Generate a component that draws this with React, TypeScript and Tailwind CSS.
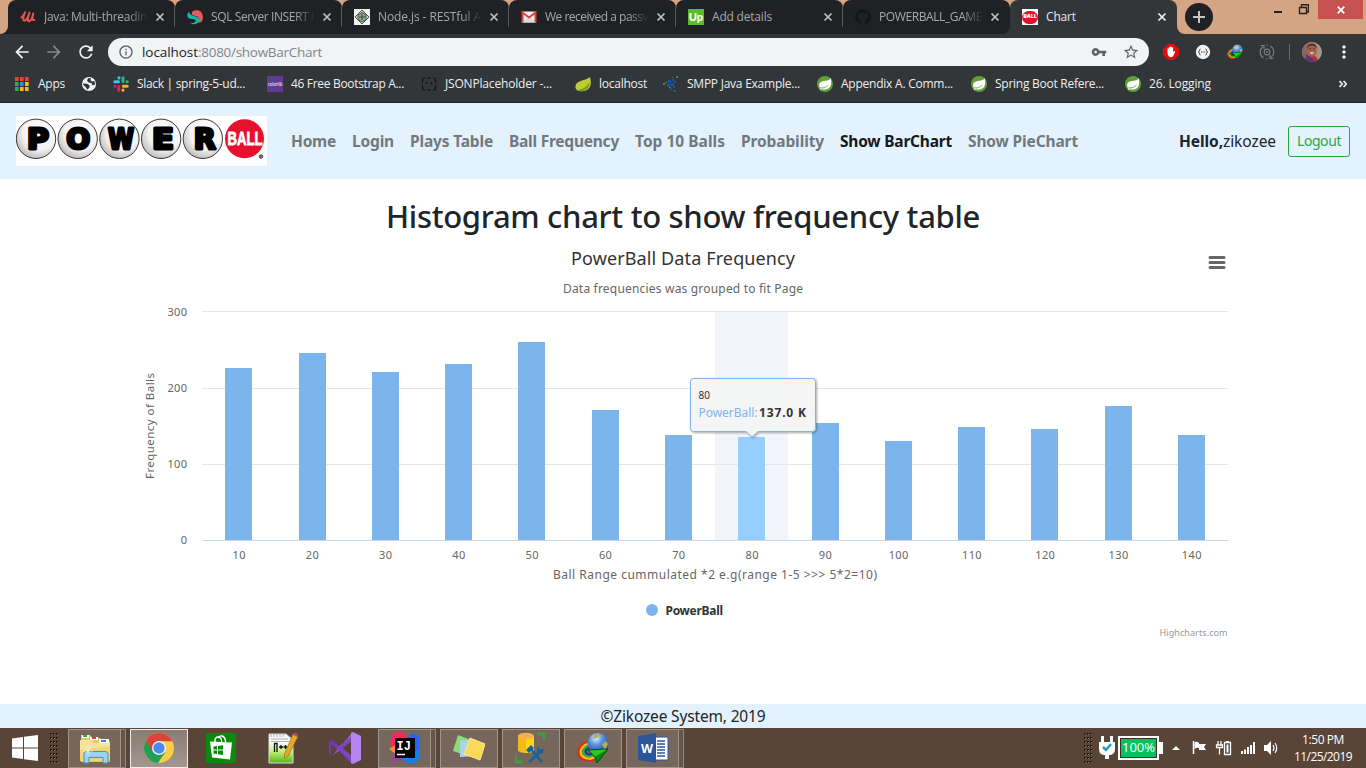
import { useLayoutEffect, useRef, type ReactNode } from "react";
import {
  MdArrowBack,
  MdArrowForward,
  MdRefresh,
  MdInfoOutline,
  MdVpnKey,
  MdStarBorder,
  MdMoreVert,
} from "react-icons/md";
import { FaGithub } from "react-icons/fa";

/* Text that is tracked in or out to fill a given width. */
function Fit({ w, className = "", children }: { w: number; className?: string; children: string }) {
  const ref = useRef<HTMLSpanElement>(null);
  useLayoutEffect(() => {
    const el = ref.current;
    if (!el) return;
    el.style.letterSpacing = "0px";
    const natural = el.getBoundingClientRect().width;
    el.style.letterSpacing = `${(w - natural) / children.length}px`;
  }, [w, children]);
  return (
    <span ref={ref} className={`inline-block shrink-0 whitespace-nowrap ${className}`}>
      {children}
    </span>
  );
}

/* ---------- favicons ---------- */

const UdemyIcon = () => (
  <svg className="size-4" viewBox="0 0 16 16" fill="none" stroke="#eb524f" strokeLinecap="round" strokeLinejoin="round">
    <path d="M1.500 8.500C3.500 6.500 4.800 4.500 5 3.300C3.800 6 2.600 9.500 3.600 11.300C5.500 12.500 7.300 9.500 8.400 7" strokeWidth="2" />
    <path d="M9.500 3.600C8 7 7 11.800 8.800 12.300C10.600 12.400 12.500 8 13.300 4.500C12.300 8 11.600 11.800 14.300 11" strokeWidth="2" />
  </svg>
);
const SqlIcon = () => (
  <svg className="size-4" viewBox="0 0 16 16">
    <path d="M15.500 11C16.800 6 14.500 1.500 10.500 1.200C7 .8 4.500 2.200 4.800 4.500C5.500 7.500 9.500 6 11.500 8.500C12.500 10 12.300 12.500 11 14C13.500 13.700 15 12.500 15.500 11Z" fill="#ee5a5a" />
    <path d="M2 2.500C0 5 -.5 8 2.500 9.500C5 10.600 8.500 10 8.700 11.700C8.500 13.800 5.500 14.500 3 13.500C5.500 16.200 10 15.800 12 12.500C13 8.500 10 8 7 7C4.500 6.300 2.500 5 2 2.500Z" fill="#18b5a2" />
  </svg>
);
const NodeIcon = () => (
  <svg className="size-4" viewBox="0 0 16 16">
    <path d="M0 0H16V16H0Z" fill="#f4f4f0" />
    <path d="M8 1L15 8L8 15L1 8Z" fill="#cfd5cf" stroke="#555" />
    <path d="M8 3.500L12 6V10.500L8 13L4 10.500V6Z" fill="#91aa91" stroke="#3f5f48" />
    <path d="M5 8H11M8 5V11" stroke="#30483a" />
  </svg>
);
const GmailIcon = () => (
  <svg className="size-4" viewBox="0 0 16 16">
    <path d="M1 2.500H15V13.500H1Z" fill="#eceff1" />
    <path d="M1 13.500L8 7L15 13.500Z" fill="#d9dcdd" />
    <path d="M1.500 13.500V3.500L8 8.500L14.500 3.500V13.500" fill="none" stroke="#db4437" strokeWidth="2" />
  </svg>
);
const UpworkIcon = () => (
  <span className="flex size-4 items-center justify-center bg-[#5bbc2e] pb-0.5 font-['Lato'] text-[11px] font-black leading-none text-white">
    Up
  </span>
);
const GithubIcon = () => <FaGithub className="size-4 text-[#141518]" />;
const BallIcon = () => (
  <span className="flex size-4 items-center justify-center bg-white">
    <span className="flex h-[13px] w-4 items-center justify-center rounded-full bg-[#e61030] font-['Open_Sans'] text-[5.5px] font-extrabold leading-none tracking-[-0.2px] text-white">
      BALL
    </span>
  </span>
);
const AppsIcon = () => (
  <svg className="size-4" viewBox="0 0 16 16">
    {["#ea4335", "#ea4335", "#ea4335", "#34a853", "#4285f4", "#fbbc05", "#34a853", "#fbbc05", "#fbbc05"].map((c, i) => (
      <rect key={i} x={(i % 3) * 5} y={1 + Math.floor(i / 3) * 5} width="3.600" height="4" fill={c} />
    ))}
  </svg>
);
const GlobeIcon = () => (
  <svg className="size-4" viewBox="0 0 16 16">
    <circle cx="8" cy="8" r="7" fill="#f1f3f4" />
    <path d="M2 7.500L6 7.800L8.500 9.300V11.500L6.300 13.800L5 11.500L2 8.500ZM7 2.200L6 4.500L7.500 6.500L10.500 7L11.500 9.500L14 8.500L13.500 5L11 5.500L9.500 4L10 2Z" fill="#323639" />
  </svg>
);
const SlackIcon = () => (
  <svg className="size-4" viewBox="0 0 16 16" fill="none" strokeWidth="3" strokeLinecap="round">
    <path d="M1.800 5.800H5.500M6 1.700V2" stroke="#36c5f0" />
    <path d="M10 1.800V5.600M14 5.800H14.200" stroke="#2eb67d" />
    <path d="M10.300 10.200H14.200M10 14V14.200" stroke="#ecb22e" />
    <path d="M5.800 10.300V14.200M1.800 10.200H2" stroke="#e01e5a" />
  </svg>
);
const ColorlibIcon = () => (
  <span className="flex size-4 items-center justify-center bg-[#5f3c91] font-['Open_Sans'] text-[4.5px] font-semibold leading-none tracking-[-0.2px] text-[#e5dcf2]">
    colorlib
  </span>
);
const JsonIcon = () => (
  <svg className="size-4" viewBox="0 0 16 16" fill="none" stroke="#0c0d0e" strokeWidth="1.200">
    <path d="M4 2H3Q1.500 2 1.500 4V6M.5 8H1.500M1.500 10V12Q1.500 14 3 14H4M12 2H13Q14.500 2 14.500 4V6M14.500 8H15.500M14.500 10V12Q14.500 14 13 14H12M6 2H10M6 14H10M5.500 6V8M10.500 6V8" />
  </svg>
);
const LeafIcon = () => (
  <svg className="size-4" viewBox="0 0 16 16">
    <path d="M15 1C16.500 6 16.500 12 11 14.500C6 16 1 15 .5 12C-.5 4 9 5.500 15 1Z" fill="#c0ca33" />
    <path d="M1 14C6 14 11 12 14.500 6C15 12 10 16 4 15.200Z" fill="#7d9c1c" />
  </svg>
);
const SmppIcon = () => (
  <svg className="size-4" viewBox="0 0 16 16" fill="#1456a8">
    <path d="M5 4h3v3H5zM9 3h2v2H9zM8 7h3v3H8zM4 8h3v3H4zM10 10h2v2h-2zM7 12h2v2H7zM10 14h3v2h-3zM11 5h2v2h-2z" />
    <path d="M13 0h2v2h-2zM0 7h2v2H0zM9 1h1v1H9zM2 6h2v1H2zM6 11h2v1H6z" fill="#4c8b35" />
  </svg>
);
const SpringIcon = () => (
  <svg className="size-4" viewBox="0 0 16 16">
    <circle cx="8" cy="8" r="8" fill="#5fa134" />
    <path d="M13.700 2.200C15 7 14 11.500 10.500 13C8 14 5 13.700 3.300 12.700C6.500 12.600 10.500 11.500 12 8C9.500 11 6 12 2.500 11.500C1 6 4.500 5.300 8.500 4.800C11 4.500 12.800 3.700 13.700 2.200Z" fill="#fff" />
    <circle cx="3.600" cy="13" r=".8" fill="#fff" />
  </svg>
);

/* ---------- browser ---------- */

const tabs: { icon: ReactNode; title: string; w: number; faded: boolean }[] = [
  { icon: <UdemyIcon />, title: "Java: Multi-threadin", w: 103, faded: true },
  { icon: <SqlIcon />, title: "SQL Server INSERT I", w: 103, faded: true },
  { icon: <NodeIcon />, title: "Node.js - RESTful A", w: 103, faded: true },
  { icon: <GmailIcon />, title: "We received a passv", w: 103, faded: true },
  { icon: <UpworkIcon />, title: "Add details", w: 60, faded: false },
  { icon: <GithubIcon />, title: "POWERBALL_GAME", w: 103, faded: true },
  { icon: <BallIcon />, title: "Chart", w: 30, faded: false },
];

function CloseX({ active }: { active: boolean }) {
  return (
    <svg className="ml-[7px] size-[10px] shrink-0" viewBox="0 0 10 10">
      <path d="M1.500 1.500L8.500 8.500M8.500 1.500L1.500 8.500" stroke={active ? "#f1f3f4" : "#bdc1c6"} strokeWidth="1.700" />
    </svg>
  );
}

function TabStrip() {
  return (
    <div className="flex h-[34px] bg-[#d5a583]">
      <div className="h-full w-2 bg-[#202124]">
        <div className="h-full w-full rounded-br-lg bg-[#d5a583]" />
      </div>
      {tabs.map((t, i) => {
        const active = i === 6;
        return (
          <div
            key={t.title}
            className={
              active
                ? "w-[167px] bg-[linear-gradient(#d5a583_50%,#202124_50%)]"
                : i === 5
                  ? "w-[167px] bg-[linear-gradient(#d5a583_50%,#323639_50%)]"
                  : "w-[167px]"
            }
          >
            <div
              className={
                active
                  ? "flex h-full items-center rounded-t-lg bg-[#323639] pl-3 text-[#e8eaed]"
                  : i === 5
                    ? "flex h-full items-center rounded-t-lg rounded-br-lg bg-[#202124] pl-3 text-[#a4a8ad]"
                    : "flex h-full items-center rounded-t-lg bg-[#202124] pl-3 text-[#a4a8ad]"
              }
            >
              <div className="flex size-4 shrink-0">{t.icon}</div>
              <div
                className={
                  t.faded
                    ? "ml-2 w-[104px] [mask-image:linear-gradient(to_right,#000_80%,transparent)]"
                    : "ml-2 w-[104px]"
                }
              >
                <Fit w={t.w} className="align-top leading-[18px]">
                  {t.title}
                </Fit>
              </div>
              <CloseX active={active} />
              <div className={i < 5 ? "ml-auto h-5 w-px bg-[#54575b]" : "hidden"} />
            </div>
          </div>
        );
      })}
      <div className="h-full w-2 bg-[#323639]">
        <div className="h-full w-full rounded-bl-lg bg-[#d5a583]" />
      </div>
      <div className="mt-[3px] flex size-7 items-center justify-center rounded-full bg-[#202124]">
        <svg className="size-3" viewBox="0 0 12 12">
          <path d="M6 0V12M0 6H12" stroke="#c4c7ca" strokeWidth="2" />
        </svg>
      </div>
      <svg className="ml-auto mr-[9px] mt-1 h-3 w-[36px]" viewBox="0 0 36 12" fill="none" stroke="#26211e">
        <path d="M1 8H9" strokeWidth="2" />
        <path d="M26.500 3.500H33.500V9.500H26.500ZM28.500 3V.7H35.500V8H33.500" strokeWidth="1.400" />
      </svg>
      <div className="mr-[3px] flex h-[19px] w-[45px] items-center justify-center bg-[#c75050]">
        <svg className="size-2" viewBox="0 0 8 8">
          <path d="M.7 .7L7.300 7.300M7.300 .7L.7 7.300" stroke="#fff" strokeWidth="1.800" />
        </svg>
      </div>
    </div>
  );
}

function IdmGlyph({ className }: { className: string }) {
  return (
    <svg className={className} viewBox="0 0 32 32">
      <defs>
        <radialGradient id="idmGlobe" cx=".4" cy=".25" r=".8">
          <stop offset="0" stopColor="#dff0ff" />
          <stop offset=".4" stopColor="#5b92dc" />
          <stop offset="1" stopColor="#12419b" />
        </radialGradient>
      </defs>
      <g fill="none" strokeWidth="2.200" transform="rotate(-15 13 19)">
        <ellipse cx="13" cy="19" rx="12" ry="9.500" stroke="#e02b20" />
        <ellipse cx="13.500" cy="19" rx="10" ry="7.500" stroke="#f6c400" />
        <ellipse cx="14" cy="19" rx="8" ry="5.500" stroke="#36b23a" />
        <ellipse cx="14.500" cy="19" rx="6" ry="3.500" stroke="#1b3c8f" />
      </g>
      <circle cx="21" cy="11.500" r="10.500" fill="url(#idmGlobe)" />
      <path d="M17 3Q20 1 22 3L20 6L16 7ZM25 12L29 9L31 12L28 18Z" fill="#b9ae4a" />
      <path d="M11 18L31 17L20 31L18 25Z" fill="#0a8a10" stroke="#044a08" />
      <path d="M12 18.500L30 17.500L18 24.500Z" fill="#2bc92b" />
    </svg>
  );
}

function Toolbar() {
  return (
    <div className="flex h-9 items-center pt-0">
      <MdArrowBack className="ml-3 size-5 text-[#f1f3f4]" />
      <MdArrowForward className="ml-3 size-5 text-[#85888b]" />
      <MdRefresh className="ml-3 size-5 text-[#f1f3f4]" />
      <div className="ml-3 flex h-7 w-[1041px] items-center rounded-full bg-[#f1f3f4]">
        <MdInfoOutline className="ml-[10px] size-4 text-[#5f6368]" />
        <div className="ml-2 flex text-[13.5px] leading-5">
          <Fit w={56} className="text-[#202124]">localhost</Fit>
          <Fit w={124} className="text-[#80868b]">:8080/showBarChart</Fit>
        </div>
        <MdVpnKey className="ml-auto size-4 text-[#5f6368]" />
        <MdStarBorder className="ml-4 mr-[10px] size-4 scale-110 text-[#5f6368]" />
      </div>
      <svg className="ml-[14px] size-4" viewBox="0 0 16 16">
        <path d="M5 0H11L16 5V11L11 16H5L0 11V5Z" fill="#e40d0d" />
        <path d="M4.500 8V4.500Q5.200 3.800 5.900 4.500V7V3.200Q6.600 2.500 7.300 3.200V7V2.800Q8 2.100 8.700 2.800V7V3.500Q9.400 2.900 10.100 3.500V8.500L11 7Q12.300 6.500 12 8L10 12.500Q7 14 5.300 12Q4.500 10.500 4.500 8Z" fill="#fff" />
      </svg>
      <svg className="ml-4 size-4" viewBox="0 0 16 16">
        <circle cx="8" cy="8" r="7.200" fill="#f3f3f3" />
        <path d="M5.500 5Q4.500 5 4.500 6.500L3.500 8L4.500 9.500Q4.500 11 5.500 11M10.500 5Q11.500 5 11.500 6.500L12.500 8L11.500 9.500Q11.500 11 10.500 11M6 8H7M7.600 8H8.600M9.200 8H10.200" fill="none" stroke="#333" />
      </svg>
      <IdmGlyph className="ml-4 size-4" />
      <svg className="ml-4 size-4" viewBox="0 0 16 16" fill="none" stroke="#777a7d" strokeWidth="1.200">
        <path d="M4 2.500A7 7 0 0 0 4.500 14M1.500 1.500H5V5M12 13.500A7 7 0 0 0 11.500 2M14.500 14.500H11V11M7.500 1H9M7 15H8.500" />
        <circle cx="8" cy="8" r="2.800" />
        <circle cx="8" cy="8" r=".4" />
      </svg>
      <div className="ml-[14px] h-4 w-px bg-[#696c6f]" />
      <svg className="ml-3 size-5" viewBox="0 0 20 20">
        <defs>
          <clipPath id="avatar">
            <circle cx="10" cy="10" r="10" />
          </clipPath>
        </defs>
        <g clipPath="url(#avatar)">
          <path d="M0 0H20V20H0Z" fill="#a49482" />
          <path d="M0 0H6V20H0Z" fill="#8e665b" />
          <path d="M2 20Q3 12 10 13Q16 14 16 20Z" fill="#b52b45" />
          <path d="M4 13L12 20M3 16L9 20" stroke="#263b9c" strokeWidth="1.500" />
          <ellipse cx="10" cy="8.500" rx="4.800" ry="6.300" fill="#a8604a" />
          <path d="M5 7Q4.500 1.500 10 1.200Q15 1.500 15 7Q13.500 3.800 10 3.800Q6.500 3.800 5 7Z" fill="#5b3630" />
          <path d="M7.500 7H9M11 7H12.500" stroke="#3d1f18" />
          <path d="M7.500 10.500Q10 13 12.300 10.500Z" fill="#fff" />
        </g>
      </svg>
      <MdMoreVert className="ml-3 size-5 text-[#f1f3f4]" />
    </div>
  );
}

const bookmarks: { icon: ReactNode; title: string; w: number; cell: string }[] = [
  { icon: <AppsIcon />, title: "Apps", w: 27, cell: "w-[66px]" },
  { icon: <GlobeIcon />, title: "", w: 0, cell: "w-8" },
  { icon: <SlackIcon />, title: "Slack | spring-5-ud...", w: 108, cell: "w-[154px]" },
  { icon: <ColorlibIcon />, title: "46 Free Bootstrap A...", w: 113, cell: "w-[154px]" },
  { icon: <JsonIcon />, title: "JSONPlaceholder -...", w: 107, cell: "w-[154px]" },
  { icon: <LeafIcon />, title: "localhost", w: 48, cell: "w-[88px]" },
  { icon: <SmppIcon />, title: "SMPP Java Example...", w: 113, cell: "w-[154px]" },
  { icon: <SpringIcon />, title: "Appendix A. Comm...", w: 112, cell: "w-[154px]" },
  { icon: <SpringIcon />, title: "Spring Boot Refere...", w: 109, cell: "w-[154px]" },
  { icon: <SpringIcon />, title: "26. Logging", w: 62, cell: "w-[90px]" },
];

function BookmarkBar() {
  return (
    <div className="flex h-[33px] items-center border-b border-[#202124] pb-1 pl-[15px] text-[#eceef0]">
      {bookmarks.map((b, i) => (
        <div key={i} className={`flex shrink-0 items-center ${b.cell}`}>
          <div className="flex size-4 shrink-0">{b.icon}</div>
          {b.title && (
            <Fit w={b.w} className={i === 0 ? "ml-[7px] leading-5" : "ml-2 leading-5"}>
              {b.title}
            </Fit>
          )}
        </div>
      ))}
      <svg className="ml-auto mr-[19px] size-2" viewBox="0 0 8 8" fill="none" stroke="#f1f3f4" strokeWidth="1.600">
        <path d="M.5 1L3.300 4L.5 7M4.500 1L7.300 4L4.500 7" />
      </svg>
    </div>
  );
}

/* ---------- page ---------- */

function Logo() {
  return (
    <svg className="h-[50px] w-[251px] shrink-0" viewBox="0 0 251 50">
      <defs>
        <radialGradient id="ball" cx=".6" cy=".35" r=".7">
          <stop offset="0" stopColor="#fff" />
          <stop offset=".6" stopColor="#f3f3f3" />
          <stop offset="1" stopColor="#b8b8b8" />
        </radialGradient>
      </defs>
      <path d="M0 0H251V50H0Z" fill="#fff" />
      {["P", "O", "W", "E", "R"].map((c, i) => (
        <g key={c}>
          <circle cx={20 + i * 41.700} cy="22.800" r="19.700" fill="url(#ball)" stroke="#222" strokeWidth=".9" />
          <text
            x={(c === "O" || c === "W" ? 8.500 : 11) + i * 41.700}
            y="33.200"
            textLength={c === "W" ? 26 : c === "O" ? 24 : 22}
            lengthAdjust="spacingAndGlyphs"
            fontSize="28"
            fontWeight="700"
            stroke="#000"
            strokeWidth="3"
            strokeLinejoin="round"
            className="font-['DejaVu_Sans']"
          >
            {c}
          </text>
        </g>
      ))}
      <circle cx="228.500" cy="22.800" r="19.500" fill="#e8112d" />
      <text x="211.500" y="29" textLength="35" lengthAdjust="spacingAndGlyphs" fontSize="19" fontWeight="700" fill="#fff" stroke="#fff" strokeWidth=".8" className="font-['Liberation_Sans']">
        BALL
      </text>
      <circle cx="245" cy="40.500" r="1.800" fill="#777" stroke="#222" strokeWidth=".7" />
    </svg>
  );
}

const links: [string, number][] = [
  ["Home", 45],
  ["Login", 42],
  ["Plays Table", 83],
  ["Ball Frequency", 110],
  ["Top 10 Balls", 90],
  ["Probability", 83],
  ["Show BarChart", 112],
  ["Show PieChart", 110],
];

function NavBar() {
  return (
    <nav className="flex h-[76px] items-center bg-[#e3f2fd] px-4 text-[15.500px] leading-6">
      <Logo />
      <div className="ml-6 flex gap-4 font-bold">
        {links.map(([label, w]) => (
          <a key={label} className={label === "Show BarChart" ? "text-[#16181b]" : "text-[#72797e]"}>
            <Fit w={w}>{label}</Fit>
          </a>
        ))}
      </div>
      <div className="ml-auto flex items-center text-[#212529]">
        <Fit w={44} className="font-bold">Hello,</Fit>
        <Fit w={53}>zikozee</Fit>
        <button className="ml-3 flex h-[31px] w-[62px] items-center justify-center rounded-[3px] border border-[#28a745] text-[14px] text-[#28a745]">
          <Fit w={44}>Logout</Fit>
        </button>
      </div>
    </nav>
  );
}

const points: [string, number][] = [
  ["10", 368], ["20", 353], ["30", 372], ["40", 364], ["50", 342], ["60", 410], ["70", 435],
  ["80", 437], ["90", 423], ["100", 441], ["110", 427], ["120", 429], ["130", 406], ["140", 435],
];

function Chart() {
  const step = 1026 / 14;
  return (
    <svg className="h-[400px] w-[1110px]" viewBox="128 243 1110 400" fontSize="11" fill="#666">
      <defs>
        <filter id="tipShadow" x="-10%" y="-20%" width="125%" height="150%">
          <feDropShadow dx="1" dy="1" stdDeviation="1" floodOpacity=".35" />
        </filter>
      </defs>
      <text x="571" y="265" textLength="224" fontSize="18" fill="#333">PowerBall Data Frequency</text>
      <text x="563" y="293" textLength="240" fontSize="12">Data frequencies was grouped to fit Page</text>
      <path d="M1210 257.500H1224M1210 262.500H1224M1210 267.500H1224" stroke="#666" strokeWidth="3" strokeLinecap="round" />
      <path d="M715 312H788V540H715Z" fill="#f2f5fa" />
      <path d="M202 311.500H1228M202 388.500H1228M202 464.500H1228" stroke="#e6e6e6" />
      {["300", "200", "100", "0"].map((t, i) => (
        <text key={t} x="187.500" y={316 + i * 76} textAnchor="end" letterSpacing=".4">{t}</text>
      ))}
      <text transform="translate(153.500 479) rotate(-90)" textLength="106" fontSize="11.500">Frequency of Balls</text>
      {points.map(([label, top], i) => (
        <g key={label}>
          <rect x={Math.round(225.3 + i * step)} y={top} width="27" height={540 - top} fill={label === "80" ? "#95ceff" : "#7cb5ec"} />
          <text x={202.5 + (i + 0.5) * step} y="559" textAnchor="middle" letterSpacing=".4">{label}</text>
        </g>
      ))}
      <path d="M202 540.500H1228" stroke="#ccd6eb" />
      <text x="553" y="579" textLength="324" fontSize="12">{"Ball Range cummulated *2 e.g(range 1-5 >>> 5*2=10)"}</text>
      <circle cx="652" cy="610" r="6" fill="#7cb5ec" />
      <text x="665.500" y="615" textLength="57.500" fontWeight="700" fontSize="12" fill="#333">PowerBall</text>
      <text x="1159.500" y="636" textLength="68" fontSize="9" fill="#999">Highcharts.com</text>
      <path
        d="M693.500 378.500H812.500Q815.500 378.500 815.500 381.500V428.500Q815.500 431.500 812.500 431.500H758L752 437L746 431.500H693.500Q690.500 431.500 690.500 428.500V381.500Q690.500 378.500 693.500 378.500Z"
        fill="#f7f7f7"
        fillOpacity=".92"
        stroke="#7cb5ec"
        filter="url(#tipShadow)"
      />
      <text x="698.500" y="399" textLength="11.500" fontSize="10" fill="#333">80</text>
      <text x="698.500" y="417" textLength="59" fontSize="12" fill="#7cb5ec">PowerBall:</text>
      <text x="759" y="417" textLength="47" fontSize="12" fontWeight="700" fill="#333">137.0 K</text>
    </svg>
  );
}

/* ---------- taskbar ---------- */

function Grip() {
  return (
    <svg className="h-8 w-2 shrink-0" viewBox="0 0 8 32">
      {Array.from({ length: 24 }, (_, i) => (
        <g key={i}>
          <rect x={(i % 3) * 3} y={1 + Math.floor(i / 3) * 4} width="2" height="2" fill="#1f1713" />
          <rect x={(i % 3) * 3 + 1} y={2 + Math.floor(i / 3) * 4} width="1" height="1" fill="#8a796d" />
        </g>
      ))}
    </svg>
  );
}

const FolderGlyph = () => (
  <svg className="size-8" viewBox="0 0 32 32">
    <path d="M2 3H11L13 6H21L23 9H31V30H2Z" fill="#e7c75c" />
    <path d="M3 3H10V6H3Z" fill="#fff" /><path d="M4 3H8V5H4Z" fill="#2cb44a" />
    <path d="M11 5H19V8H11Z" fill="#fff" /><path d="M13 5H17V7H13Z" fill="#dc3a2e" />
    <path d="M20 7H30V11H20Z" fill="#fff" /><path d="M22 8H27V10H22Z" fill="#268ee0" />
    <path d="M1 8H13L15 11H31V28L1 29Z" fill="#f7e49a" />
    <path d="M1 18L31 14V28L1 29Z" fill="#f1d679" />
    <path d="M5 31V22Q5 19.500 8 19.500H26Q29 19.500 29 22V31H24V25.500H10V31Z" fill="#9bd2ee" stroke="#4993bb" />
    <path d="M9 14V24M4 19H14M6 16L12 22M12 16L6 22" stroke="#fff" strokeOpacity=".7" strokeWidth=".8" />
  </svg>
);
const ChromeGlyph = () => (
  <svg className="size-[30px]" viewBox="0 0 30 30">
    <circle cx="15" cy="15" r="15" fill="#fdd043" />
    <path d="M15 15L2 7.500A15 15 0 0 0 14 30L21.500 18.800Z" fill="#219f56" />
    <path d="M2 7.500A15 15 0 0 1 28.300 8.200H15L8.500 18.700Z" fill="#db4437" />
    <circle cx="15" cy="15" r="7" fill="#f4f4f4" />
    <circle cx="15" cy="15" r="5.700" fill="#4a8af4" />
  </svg>
);
const StoreGlyph = () => (
  <svg className="size-[30px]" viewBox="0 0 30 30">
    <path d="M0 0H30V30H0Z" fill="#0a8a0a" />
    <path d="M9 9V7Q9.500 4 12 4Q15 4 15.500 7V9M12 5Q13 2.500 16 3Q19.500 4 19.500 9" fill="none" stroke="#fff" strokeWidth="1.400" />
    <path d="M4 8.500L26 9.500L24 26.500L6 24.500Z" fill="#fff" />
    <path d="M7.500 13.500L11 13V16.500H7.500ZM12 12.900L17 12.300V16.500H12ZM7.500 17.500H11V21L7.500 20.500ZM12 17.500H17V22L12 21.200Z" fill="#0a8a0a" />
  </svg>
);
const NotepadGlyph = () => (
  <svg className="h-8 w-[30px]" viewBox="0 0 30 32">
    <defs>
      <linearGradient id="pad" x1="0" y1="0" x2="0" y2="1">
        <stop offset=".3" stopColor="#fafafa" /><stop offset=".6" stopColor="#c8ee77" /><stop offset="1" stopColor="#4fb814" />
      </linearGradient>
    </defs>
    <path d="M1 2H18L25 8V31H1Z" fill="url(#pad)" stroke="#ddd" />
    <path d="M3 2V5M6 2V5M9 2V5M12 2V5M15 2V5M3 7H20M3 9.500H21" stroke="#999" strokeWidth=".8" />
    <path d="M6.500 20V11M6.500 11.500H9V20M11 15H15M13 13V17M15.500 15H19.500M17.500 13V17" stroke="#111" strokeWidth="1.300" fill="none" />
    <path d="M25 2L30 4.500L20 24L16.500 26.500L16.500 22Z" fill="#e5a82b" stroke="#a46a18" strokeWidth=".7" />
    <path d="M24.500 2.500L27 .5L30.500 2L29.500 5Z" fill="#9e5560" />
  </svg>
);
const VisualStudioGlyph = () => (
  <svg className="size-8" viewBox="0 0 32 32">
    <path d="M0 10L3 8L23 25V32L2 12V22L0 23Z" fill="#6f3bad" />
    <path d="M3 24L24 0V8L3 24L0 22Z" fill="#9d61dc" />
    <path d="M22 1L24 0L32 4V28L24 32L22 31Z" fill="#b782f3" />
    <path d="M7 16L22 5V12L14 17L22 22V29Z" fill="#7e45bf" />
    <path d="M14 16L22 9.500V23Z" fill="#594034" />
  </svg>
);
const IntellijGlyph = () => (
  <svg className="size-8" viewBox="0 0 32 32">
    <path d="M4 1L15 0L19 9L8 20L1 12Z" fill="#fb275c" />
    <path d="M0 17L8 12V23Z" fill="#ff8b38" />
    <path d="M19 6L23 1L30 4L31 27L22 32L12 27Z" fill="#2864ee" />
    <path d="M22 20L31 18V27L22 32L13 27Z" fill="#0a84f5" />
    <path d="M2 31L7 18L20 24Z" fill="#a33ca9" />
    <path d="M6 6H26V26H6Z" fill="#050505" />
    <path d="M8 22.500H16" stroke="#fff" strokeWidth="1.500" />
    <text x="7.500" y="18" fontSize="12" fontWeight="700" fill="#fff" className="font-['Liberation_Mono']">IJ</text>
  </svg>
);
const NotesGlyph = () => (
  <svg className="size-8" viewBox="0 0 32 32">
    <path d="M5 3L18 8L12 23L0 19Z" fill="#8edb7b" />
    <path d="M7 9L22 7L24 24L7 25Z" fill="#a8d5ed" />
    <path d="M17 6L32 12L27 28L11 22Z" fill="#f9d95a" stroke="#ffe98a" />
  </svg>
);
const SqlStudioGlyph = () => (
  <svg className="size-8" viewBox="0 0 32 32">
    <path d="M3 4V18C3 22 19 22 19 18V4Z" fill="#f4b915" />
    <path d="M11 4H19V18Q18 21 11 21Z" fill="#ffd51b" />
    <ellipse cx="11" cy="4" rx="8" ry="3.300" fill="#f5af4f" />
    <path d="M22 2H29V8M1 23V30H8" fill="none" stroke="#429b45" strokeWidth="2.800" />
    <path d="M15 16L27 30M27 18L14 30" stroke="#12649f" strokeWidth="2.600" />
    <path d="M11 18L16 13L19 16L14 21ZM23 14L25 18L29 17L28 21L24 22L22 19Z" fill="#12649f" />
  </svg>
);
const WordGlyph = () => (
  <svg className="size-8" viewBox="0 0 32 32">
    <path d="M15 5H31V28H15Z" fill="#fff" stroke="#2b579a" />
    <path d="M20 9H28M20 12H28M20 15H28M20 18H28M20 21H28M20 24H28" stroke="#2b579a" strokeWidth="1.300" />
    <path d="M1 4L19 1V31L1 28Z" fill="#2b579a" />
    <text x="4" y="21" textLength="12" lengthAdjust="spacingAndGlyphs" fontSize="13" fontWeight="700" fill="#fff" className="font-['Open_Sans']">W</text>
  </svg>
);

function TaskButton({ stacked = false, active = false, children }: { stacked?: boolean; active?: boolean; children: ReactNode }) {
  return (
    <div className="flex h-[39px] w-[58px]">
      <div
        className={
          active
            ? "flex h-full flex-1 items-center justify-center border border-[#f0edeb] bg-linear-to-b from-[#8b7c74] to-[#a3968f]"
            : "flex h-full flex-1 items-center justify-center border border-[#a0948c] bg-[#77665c]"
        }
      >
        {children}
      </div>
      {stacked && <div className="h-full w-[5px] border border-l-0 border-[#94877e] bg-[#65544a]" />}
    </div>
  );
}

function Taskbar() {
  return (
    <footer className="flex h-10 items-center bg-[#594438] font-['Open_Sans'] text-[12px] text-white">
      <svg className="ml-3 size-[26px] shrink-0" viewBox="0 0 26 26" fill="#fff">
        <path d="M0 3.500L11 2V12.500H0ZM12 1.800L26 0V12.500H12ZM0 13.500H11V24L0 22.500ZM12 13.500H26V26L12 24.200Z" />
      </svg>
      <div className="ml-3"><Grip /></div>
      <div className="ml-[10px] flex items-center gap-1">
        <TaskButton stacked><FolderGlyph /></TaskButton>
        <TaskButton active><ChromeGlyph /></TaskButton>
        <div className="flex w-[58px] justify-center"><StoreGlyph /></div>
        <div className="flex w-[58px] justify-center"><NotepadGlyph /></div>
        <div className="flex w-[58px] justify-center"><VisualStudioGlyph /></div>
        <TaskButton stacked><IntellijGlyph /></TaskButton>
        <TaskButton><NotesGlyph /></TaskButton>
        <TaskButton><SqlStudioGlyph /></TaskButton>
        <TaskButton><IdmGlyph className="size-8" /></TaskButton>
        <TaskButton stacked><WordGlyph /></TaskButton>
      </div>
      <div className="ml-auto"><Grip /></div>
      <svg className="ml-[7px] h-6 w-4 shrink-0" viewBox="0 0 16 24">
        <path d="M2 0H5V6H11V0H14V6H16V13Q16 19 10 19V23H6V19Q0 19 0 13V6H2Z" fill="#fff" />
        <path d="M4 11L7 14L12 8" fill="none" stroke="#219cc0" strokeWidth="2.500" />
      </svg>
      <div className="ml-[3px] flex h-6 w-[41px] items-center justify-center border-2 border-white bg-[#06c160] ring-1 ring-inset ring-[#3b2d25]">
        <Fit w={33} className="text-[13px]">100%</Fit>
      </div>
      <div className="h-3 w-1 bg-white" />
      <svg className="ml-[9px] h-6 w-[112px] shrink-0" viewBox="0 0 112 24">
        <path d="M0 14L4 10L8 14Z" fill="#fff" />
        <path d="M21.500 5V18" stroke="#fff" strokeWidth="1.500" />
        <path d="M22.500 6Q25 5 27 7V8H34L32 11L34 14H27V12Q25 11 22.500 13Z" fill="#fff" />
        <path d="M46 5V9M49 5V9M44.500 9H50.500V11.500H44.500ZM47.500 12V18.500" fill="none" stroke="#fff" strokeWidth="1.300" />
        <path d="M52.500 6.500H58.500V18.500H52.500Z" fill="none" stroke="#fff" strokeWidth="1.300" />
        <path d="M54.500 8.500H56.500V16.500H54.500ZM54 5H57V6H54Z" fill="#fff" />
        <path d="M69 15H71V18H69ZM72 13.500H74V18H72ZM75 11H77V18H75ZM78 9H80V18H78ZM81 6H83V18H81Z" fill="#fff" />
        <path d="M92 9H95L99 5V19L95 15H92Z" fill="#fff" />
        <path d="M101 9Q103 12 101 15M103 7Q106.500 12 103 17" fill="none" stroke="#fff" strokeWidth="1.200" />
      </svg>
      <div className="ml-2 mr-3 flex w-[62px] shrink-0 flex-col items-center">
        <Fit w={42} className="leading-[17px]">1:50 PM</Fit>
        <Fit w={58} className="leading-[17px]">11/25/2019</Fit>
      </div>
    </footer>
  );
}

export default function App() {
  return (
    <div className="flex h-[768px] w-[1366px] flex-col overflow-hidden bg-white font-['Noto_Sans',sans-serif]">
      <header className="bg-[#323639] font-['Open_Sans',sans-serif] text-[12px]">
        <TabStrip />
        <Toolbar />
        <BookmarkBar />
      </header>
      <NavBar />
      <main className="flex min-h-0 flex-1 flex-col items-center text-[#212529]">
        <h1 className="mt-[18px] h-[46px] text-[31px] font-medium leading-[38px]">
          <Fit w={594}>Histogram chart to show frequency table</Fit>
        </h1>
        <Chart />
      </main>
      <div className="flex h-6 items-center justify-center bg-[#e3f2fd] text-[15.500px] leading-6 text-[#212529]">
        <Fit w={165}>©Zikozee System, 2019</Fit>
      </div>
      <Taskbar />
    </div>
  );
}
